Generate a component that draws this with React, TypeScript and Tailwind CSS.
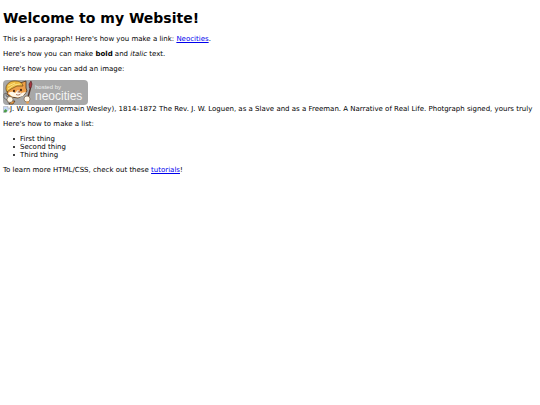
function NeocitiesBadge() {
  return (
    <svg width="85" height="25" viewBox="0 0 85 25" role="img" aria-label="hosted by neocities" className="block">
      <rect width="85" height="25" rx="4" fill="#a8a8a8" />
      {/* wrench */}
      <path d="M1 14l2-1v3l2 1 1-3 1 3-1 2 2 4-2 1-2-4-3-2z" fill="#b9bcc0" stroke="#4a4744" strokeWidth=".6" />
      {/* cat head */}
      <path d="M5 9l3-5 9-1 6-2 0 7 1 3-3 4-6 3-7-1-4-3z" fill="#ee9f4a" stroke="#3a2512" strokeWidth=".7" />
      <path d="M5 13c3-1 5-2 7 0l3-3 3 3 5-1-3 4-5 1.500-6-1z" fill="#fff7e8" />
      {/* helmet */}
      <path d="M4 12c-3-5 1-11 7-11 5 0 8 1 9 5l-6 0-6 3-4 3z" fill="#eebb42" stroke="#6b4615" strokeWidth=".7" />
      <path d="M5 6l7-3M5 9l6-4 6-1" stroke="#fbe487" strokeWidth="1" fill="none" />
      <ellipse cx="11" cy="11" rx=".9" ry="1.300" fill="#30180c" />
      <ellipse cx="18" cy="10" rx=".9" ry="1.300" fill="#30180c" />
      <path d="M14.500 12l2-.5-.5 1.500M13 14.500c2 1 4 .5 5-1" stroke="#8b3c23" strokeWidth=".7" fill="none" />
      {/* paintbrush */}
      <path d="M25 17L27.500 8" stroke="#54352a" strokeWidth="1.500" />
      <path d="M26.500 8l-.5-4 2-3 1 3-1 4z" fill="#a83540" stroke="#4b1919" strokeWidth=".6" />
      {/* paws */}
      <path d="M9 21l-3 3h4l2-3z" fill="#ee9f4a" stroke="#3a2512" strokeWidth=".6" />
      <circle cx="7" cy="19.500" r="3" fill="#fff8e9" stroke="#6b5235" strokeWidth=".6" />
      <circle cx="24" cy="19" r="3" fill="#fff8e9" stroke="#6b5235" strokeWidth=".6" />
      <path d="M23 22l1 2 2-1-.5-2z" fill="#ee9f4a" />
      <text x="32" y="9" fontSize="6" fill="#eeeeee" fontFamily="'Liberation Sans', sans-serif">hosted by</text>
      <text x="32" y="20" fontSize="12" fill="#f4f4f4" fontFamily="'Liberation Sans', sans-serif">neocities</text>
    </svg>
  )
}

function BrokenImage({ alt }: { alt: string }) {
  return (
    <div className="flex items-center whitespace-nowrap">
      <svg width="7" height="7" viewBox="0 0 16 16" aria-hidden="true" className="shrink-0">
        <path d="M1 1h10l4 4v10H1z" fill="#c5d8f5" stroke="#999999" />
        <path d="M2 14v-3l4-4 4 4-3 3z" fill="#4c9d45" />
        <path d="M11 1v4h4" fill="#ffffff" stroke="#999999" />
        <path d="M7 16l9-9v9z" fill="#ffffff" />
      </svg>
      <span>{alt}</span>
    </div>
  )
}

const items = ["First thing", "Second thing", "Third thing"]

export default function App() {
  return (
    <main className="flex flex-col gap-[7px] px-[3px] pt-[10px] font-['DejaVu_Sans',sans-serif] text-[7px] leading-2 text-black">
      <h1 className="mb-[2px] text-[14px] leading-4 font-bold">Welcome to my Website!</h1>
      <p>
        This is a paragraph! Here's how you make a link:{" "}
        <a href="https://neocities.org" className="text-[#0000ee] underline">Neocities</a>.
      </p>
      <p>
        Here's how you can make <strong>bold</strong> and <em>italic</em> text.
      </p>
      <p>Here's how you can add an image:</p>
      <div>
        <NeocitiesBadge />
        <BrokenImage alt="J. W. Loguen (Jermain Wesley), 1814-1872 The Rev. J. W. Loguen, as a Slave and as a Freeman. A Narrative of Real Life. Photgraph signed, yours truly" />
      </div>
      <p>Here's how to make a list:</p>
      <ul className="pl-[10px]">
        {items.map((item) => (
          <li key={item} className="flex items-center gap-[5px] before:size-[2px] before:rounded-full before:bg-black">
            {item}
          </li>
        ))}
      </ul>
      <p>
        To learn more HTML/CSS, check out these{" "}
        <a href="https://neocities.org/tutorials" className="text-[#0000ee] underline">tutorials</a>!
      </p>
    </main>
  )
}
